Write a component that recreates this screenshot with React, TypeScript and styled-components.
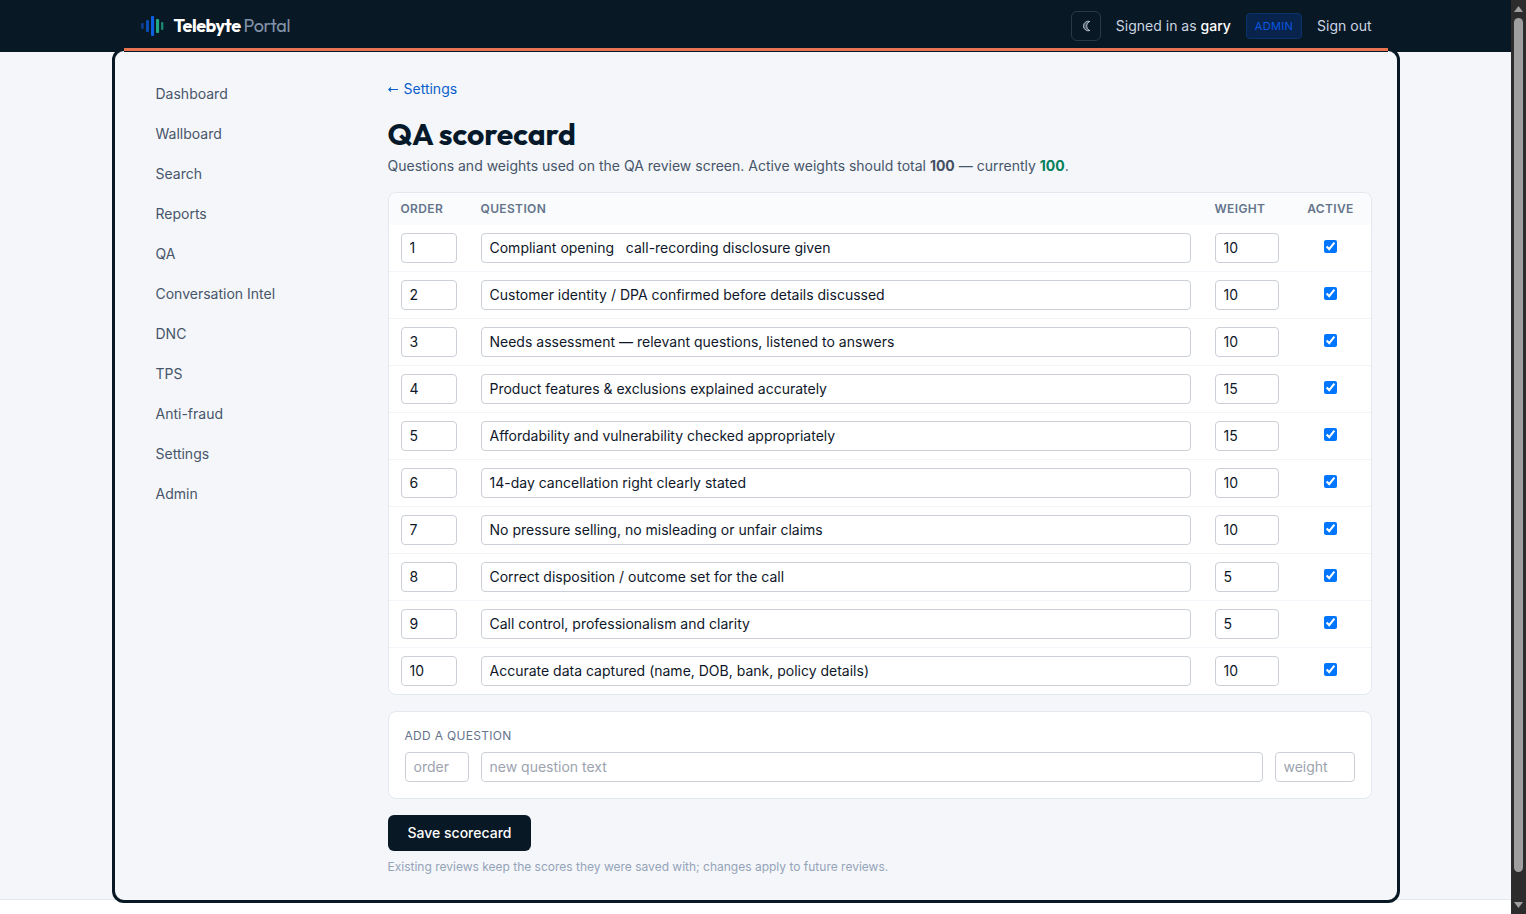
import React from 'react';
import styled, { createGlobalStyle } from 'styled-components';

const navy = '#081825';
const display = "'Outfit', 'Lato', sans-serif";

const GlobalStyle = createGlobalStyle`
  *, *::before, *::after { box-sizing: border-box; }
  html, body { margin: 0; padding: 0; overflow: hidden; background: #fff; }
  body { font-family: 'Inter', sans-serif; font-size: 14px; line-height: 20px; color: #475569; }
  input, button { font: inherit; }
`;

const Viewport = styled.div`
  display: flex;
  width: 1526px;
  height: 914px;
  overflow: hidden;
`;

const Page = styled.div`
  width: 1511px;
  height: 914px;
  display: flex;
  flex-direction: column;
  background: #f4f6fa;
`;

const Header = styled.header`
  flex: none;
  height: 52px;
  background: ${navy};
`;

const HeaderInner = styled.div`
  width: 1280px;
  height: 52px;
  margin: 0 auto;
  padding: 0 24px;
  display: flex;
  align-items: center;
  justify-content: space-between;
`;

const Brand = styled.div`
  display: flex;
  align-items: center;
  gap: 9px;
`;

const BrandName = styled.span`
  display: flex;
  gap: 3px;
  font-family: ${display};
  font-size: 18px;
  line-height: 28px;
`;

const BrandBold = styled.span`
  color: #fff;
  font-weight: 700;
  letter-spacing: -0.45px;
`;

const BrandLight = styled.span`
  color: #8292a8;
  font-weight: 400;
  letter-spacing: -0.35px;
`;

const Account = styled.div`
  display: flex;
  align-items: center;
  color: #cbd5e1;
`;

const ThemeButton = styled.button`
  width: 30px;
  height: 30px;
  margin-right: 15px;
  padding: 0;
  display: flex;
  align-items: center;
  justify-content: center;
  border: 1px solid #2b3947;
  border-radius: 6px;
  background: transparent;
`;

const UserName = styled.span`
  color: #fff;
  font-weight: 500;
`;

const RoleBadge = styled.span`
  height: 26px;
  margin: 0 15px;
  padding: 0 8px;
  border: 1px solid #0b3269;
  border-radius: 4px;
  background: #08244d;
  color: #0b57e0;
  font-size: 11px;
  line-height: 24px;
  letter-spacing: 0.3px;
`;

const Frame = styled.div`
  position: relative;
  flex: none;
  width: 1288px;
  height: 855px;
  margin: -4px auto -4px;
  padding: 0 25px;
  display: flex;
  gap: 24px;
  border: 3px solid ${navy};
  border-radius: 12px;
  background: #f4f6fa;
  z-index: 1;

  &::before {
    content: '';
    position: absolute;
    top: -3px;
    left: 9px;
    right: 9px;
    height: 4px;
    border-bottom: 1px solid ${navy};
    background: #e87351;
  }
`;

const Nav = styled.nav`
  width: 224px;
  padding-top: 23px;
  display: flex;
  flex-direction: column;
`;

const NavItem = styled.a`
  height: 40px;
  padding: 10px 16px;
  line-height: 20px;
`;

const Main = styled.main`
  width: 984px;
  padding-top: 28px;
`;

const BackLink = styled.a`
  display: flex;
  align-items: center;
  gap: 5.5px;
  height: 20px;
  padding-left: 0.5px;
  color: #0b5fcb;
`;

const Title = styled.h1`
  margin: 17px 0 0;
  height: 36px;
  font-family: ${display};
  font-size: 30px;
  line-height: 36px;
  font-weight: 700;
  letter-spacing: 0;
  color: #06192b;
`;

const Intro = styled.p`
  margin: 4px 0 16px;
  line-height: 20px;
`;

const Total = styled.strong<{ $ok?: boolean }>`
  font-weight: 700;
  color: ${p => (p.$ok ? '#04805a' : '#435063')};
`;

const Card = styled.section`
  border: 1px solid #e2e8ee;
  border-radius: 8px;
  background: #fff;
  overflow: hidden;
`;

const Row = styled.div`
  display: grid;
  grid-template-columns: 80px 1fr 88px 80px;
  height: 47px;
  padding-top: 8px;
  border-bottom: 1px solid #f1f5f9;

  &:last-child { border-bottom: 0; height: 46px; }
`;

const HeadRow = styled(Row)`
  height: 32px;
  padding: 0;
  border: 0;
  background: #f9fbfd;
  color: #64748b;
  font-size: 12px;
  font-weight: 600;
  line-height: 31px;
  letter-spacing: 0.36px;
`;

const Cell = styled.div<{ $center?: boolean }>`
  padding: 0 12px;
  text-align: ${p => (p.$center ? 'center' : 'left')};
`;

const Field = styled.input`
  display: block;
  width: 100%;
  height: 30px;
  padding: 0 8px 2px;
  border: 1px solid #cbd0d6;
  border-radius: 4px;
  background: #fff;
  color: #0f172a;
  outline: none;

  &::placeholder { color: #9ca3af; opacity: 1; }
`;

const Check = styled.input`
  display: block;
  width: 13px;
  height: 13px;
  margin: 7px auto 0;
`;

const AddCard = styled(Card)`
  height: 88px;
  margin-top: 16px;
  padding: 16px;
`;

const AddLabel = styled.div`
  margin-bottom: 8px;
  color: #64748b;
  font-size: 12px;
  line-height: 16px;
  letter-spacing: 0.3px;
`;

const AddFields = styled.div`
  display: grid;
  grid-template-columns: 64px 1fr 80px;
  gap: 12px;
`;

const SaveButton = styled.button`
  display: block;
  width: 143px;
  height: 36px;
  margin-top: 16px;
  padding: 0 0 0 1px;
  border: 0;
  border-radius: 6px;
  background: ${navy};
  color: #fff;
  font-weight: 500;
`;

const Note = styled.p`
  margin: 8px 0 0;
  color: #94a3b8;
  font-size: 12px;
  line-height: 16px;
`;

const Footer = styled.footer`
  flex: 1;
  border-top: 1px solid #e2e8f0;
  background: #fff;
`;

const Scrollbar = styled.div`
  width: 15px;
  height: 914px;
  padding: 6px 0 5px;
  display: flex;
  flex-direction: column;
  align-items: center;
  background: #2c2c2c;
`;

const Arrow = styled.svg`
  flex: none;
  display: block;
`;

const Thumb = styled.div`
  width: 9px;
  height: 854px;
  margin: 6px 0 30px;
  border-radius: 5px;
  background: #9f9f9f;
`;

const navItems = ['Dashboard', 'Wallboard', 'Search', 'Reports', 'QA', 'Conversation Intel', 'DNC', 'TPS', 'Anti-fraud', 'Settings', 'Admin'];

const questions: [string, number][] = [
  ['Compliant opening \u00a0 call-recording disclosure given', 10],
  ['Customer identity / DPA confirmed before details discussed', 10],
  ['Needs assessment — relevant questions, listened to answers', 10],
  ['Product features & exclusions explained accurately', 15],
  ['Affordability and vulnerability checked appropriately', 15],
  ['14-day cancellation right clearly stated', 10],
  ['No pressure selling, no misleading or unfair claims', 10],
  ['Correct disposition / outcome set for the call', 5],
  ['Call control, professionalism and clarity', 5],
  ['Accurate data captured (name, DOB, bank, policy details)', 10],
];

const Logo = () => (
  <svg width="25" height="22" viewBox="0 0 25 22">
    <rect x="1" y="8" width="2.8" height="6" rx="1" fill="#0b57d0" opacity=".6" />
    <rect x="6" y="5" width="3" height="12" rx="1" fill="#0b57d0" opacity=".85" />
    <rect x="11" y="1" width="3.1" height="20" rx="1" fill="#0b5fe0" />
    <rect x="16" y="4" width="3.1" height="14" rx="1" fill="#22a884" />
    <rect x="21" y="7" width="2.4" height="8" rx="1" fill="#22a884" opacity=".75" />
  </svg>
);

const Moon = () => (
  <svg width="10" height="12" viewBox="0 0 10 12">
    <path d="M8.8 1.4A4.9 4.8 0 1 0 8.8 10.6A4.9 4.9 0 0 1 8.8 1.4Z" fill="#dbe3ee" fillOpacity=".3" stroke="#dbe3ee" strokeWidth=".8" strokeLinejoin="round" />
  </svg>
);

const BackArrow = () => (
  <svg width="10" height="8" viewBox="0 0 10 8">
    <path d="M0.5 4.5H10M3 2.5L0.8 4.5L3 6.5" fill="none" stroke="#0b5fcb" strokeWidth="1.1" />
  </svg>
);

export default function App() {
  return (
    <Viewport>
      <GlobalStyle />
      <Page>
        <Header>
          <HeaderInner>
            <Brand>
              <Logo />
              <BrandName>
                <BrandBold>Telebyte</BrandBold>
                <BrandLight>Portal</BrandLight>
              </BrandName>
            </Brand>
            <Account>
              <ThemeButton aria-label="Toggle theme"><Moon /></ThemeButton>
              <span>Signed in as <UserName>gary</UserName></span>
              <RoleBadge>ADMIN</RoleBadge>
              <span>Sign out</span>
            </Account>
          </HeaderInner>
        </Header>
        <Frame>
          <Nav>
            {navItems.map(item => <NavItem key={item}>{item}</NavItem>)}
          </Nav>
          <Main>
            <BackLink><BackArrow />Settings</BackLink>
            <Title>QA scorecard</Title>
            <Intro>
              Questions and weights used on the QA review screen. Active weights should total <Total>100</Total> — currently <Total $ok>100</Total>.
            </Intro>
            <Card>
              <HeadRow>
                <Cell>ORDER</Cell>
                <Cell>QUESTION</Cell>
                <Cell>WEIGHT</Cell>
                <Cell $center>ACTIVE</Cell>
              </HeadRow>
              {questions.map(([text, weight], i) => (
                <Row key={text}>
                  <Cell><Field defaultValue={i + 1} /></Cell>
                  <Cell><Field defaultValue={text} /></Cell>
                  <Cell><Field defaultValue={weight} /></Cell>
                  <Cell $center><Check type="checkbox" defaultChecked /></Cell>
                </Row>
              ))}
            </Card>
            <AddCard>
              <AddLabel>ADD A QUESTION</AddLabel>
              <AddFields>
                <Field placeholder="order" />
                <Field placeholder="new question text" />
                <Field placeholder="weight" />
              </AddFields>
            </AddCard>
            <SaveButton>Save scorecard</SaveButton>
            <Note>Existing reviews keep the scores they were saved with; changes apply to future reviews.</Note>
          </Main>
        </Frame>
        <Footer />
      </Page>
      <Scrollbar>
        <Arrow width="9" height="6" viewBox="0 0 9 6"><path d="M4.5 0L9 6H0z" fill="#9f9f9f" /></Arrow>
        <Thumb />
        <Arrow width="9" height="6" viewBox="0 0 9 6"><path d="M0 0h9L4.5 6z" fill="#9f9f9f" /></Arrow>
      </Scrollbar>
    </Viewport>
  );
}
